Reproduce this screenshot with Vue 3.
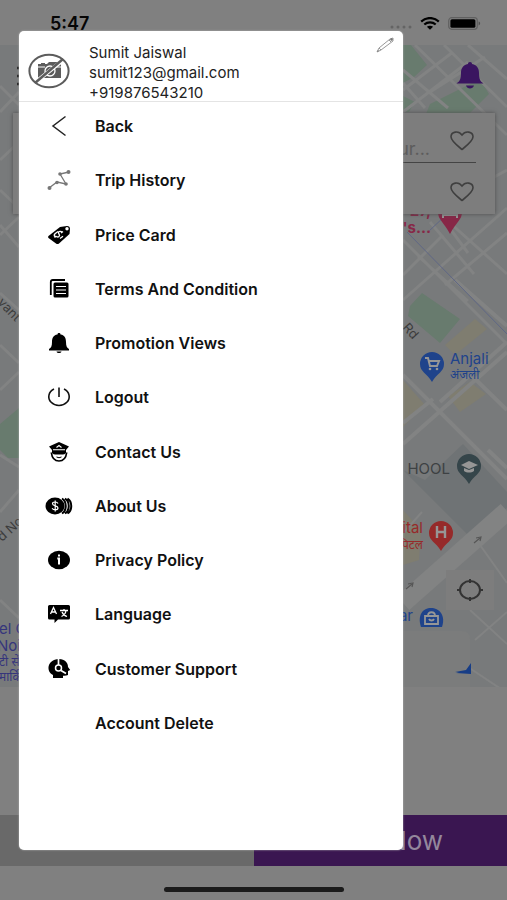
<script setup>
const items = [
  { label: 'Back', icon: 'back' },
  { label: 'Trip History', icon: 'trip' },
  { label: 'Price Card', icon: 'price' },
  { label: 'Terms And Condition', icon: 'terms' },
  { label: 'Promotion Views', icon: 'bell' },
  { label: 'Logout', icon: 'power' },
  { label: 'Contact Us', icon: 'officer' },
  { label: 'About Us', icon: 'coins' },
  { label: 'Privacy Policy', icon: 'info' },
  { label: 'Language', icon: 'language' },
  { label: 'Customer Support', icon: 'support' },
  { label: 'Account Delete', icon: '' }
]
</script>

<template>
  <div class="screen">
    <header class="status">
      <time class="clock">5:47</time>
      <div class="status-icons">
        <svg class="dots" viewBox="0 0 22 4" aria-hidden="true">
          <g fill="#646464"><circle cx="2" cy="2" r="1.5" /><circle cx="8" cy="2" r="1.5" /><circle cx="14" cy="2" r="1.5" /><circle cx="20" cy="2" r="1.5" /></g>
        </svg>
        <svg class="wifi" viewBox="0 0 20 13" aria-hidden="true">
          <path d="M1.2 4.6C6.2-.1 13.8-.1 18.8 4.6M4.3 7.5c3.3-2.9 8.1-2.9 11.4 0" fill="none" stroke="#000" stroke-width="2.3" />
          <path d="M6.9 9.7c1.8-1.4 4.4-1.4 6.2 0L10 12.8z" />
        </svg>
        <svg class="battery" viewBox="0 0 33 13" aria-hidden="true">
          <rect x=".7" y=".7" width="28.6" height="11.6" rx="3" fill="none" stroke="#606060" stroke-width="1.2" />
          <rect x="2.4" y="2.2" width="25" height="8.6" rx="1.6" />
          <path d="M30.6 4.6c2 .5 2 3.300 0 3.800z" fill="#505050" />
        </svg>
      </div>
    </header>

    <main class="map">
      <svg class="map-art" viewBox="0 45 507 642" preserveAspectRatio="xMaxYMin slice" aria-hidden="true">
        <rect y="45" width="507" height="642" fill="#787a7b" />
        <g fill="#687b6e">
          <path d="M403 45h8l16 20-13 12-11 6zM430 104l50-25 9 15-20 20h-43zM403 96l12 6-6 10h-6zM410 306l12-13 38 26-20 24-32-27z" />
          <path d="M0 424l19-16v50H8l-8-8z" />
        </g>
        <g fill="#7f7d70">
          <path d="M445 345l30-26 12 10-32 26zM448 396l22-14 16 12-26 18zM403 380l22 25-22 22zM403 510l18 20-2 30-16 5zM403 670l26 14h-26z" />
        </g>
        <path d="M425 480l38-36 44 48v16l-40 26-64-64z" fill="#6f7375" />
        <g fill="none" stroke="#828383" stroke-width="3">
          <path d="M415 45l92 90M444 45l63 62M403 90l50-38M403 112l65-50M425 108l-22-25M403 70l45 38M430 92l55-35M468 45l39 34M470 190l37-20M403 240l104 104M440 214l67 60M403 300l104-92M418 256l50 45M445 285l62-52M440 215l28 38M455 206l35-30M403 275l40-40M430 222l44 52" />
          <path d="M403 375l104 104M403 444l104-92M455 280l52 46M403 423l30-24M440 402l67-60M470 374l37 36M488 450l19 18" stroke-width="4" />
          <path d="M403 603l104-92" stroke-width="19" />
          <path d="M470 610l37 34M450 655l57 38M475 640l32-28M404 532l18-20M440 687l-30-18M480 545l27 38" stroke-width="2" />
          <path d="M0 86l19 19M0 112l19-20M0 160l19-18M0 190l19 18M0 225l19 22M0 235l19-18M0 293l19 17M0 345l19 18M0 390l19-18M0 512l19-22M0 455l19 12M0 600l19 18" />
        </g>
        <path d="M407 232l100 102M428 232l18-17" fill="none" stroke="#5f6785" stroke-width="1" />
        <g fill="none" stroke="#565656" stroke-width="1.2">
          <path d="M474 543l6-5m-4 0l5-1-1 4M406 589l6-5m-4 0l5-1-1 4" />
        </g>

        <g class="place rose">
          <text x="431" y="216" text-anchor="end" font-weight="700">27,</text>
          <text x="431" y="233" text-anchor="end" font-weight="700">C's...</text>
          <path d="M438 207a12 12 0 0 1 24 5c0 8-6 10-12 22-6-12-12-14-12-22z" fill="#872747" />
          <path d="M443 218v-7m0 4h14v3m-11-3v-3h11v3" fill="none" stroke="#969696" stroke-width="2" />
        </g>
        <text class="road" transform="translate(402 328) rotate(48)">Rd</text>
        <text class="road" transform="translate(-3 303) rotate(46)">vant</text>
        <text class="road" transform="translate(2 542) rotate(-42)">d No</text>

        <g class="place blue">
          <path d="M420 364a12 12 0 0 1 24 0c0 8-7 9-12 18-5-9-12-10-12-18z" />
          <path d="M425 358h3l2 8h7l2-5h-10" fill="none" stroke="#969696" stroke-width="2" />
          <circle cx="430" cy="369" r="1.3" fill="#969696" /><circle cx="437" cy="369" r="1.3" fill="#969696" />
          <text x="450" y="364">Anjali</text>
          <text class="hindi" x="450" y="379">अंजली</text>
        </g>
        <g class="place slate">
          <text x="450" y="474" text-anchor="end">HOOL</text>
          <path d="M457 466a12 12 0 0 1 24 0c0 8-7 9-12 18-5-9-12-10-12-18z" />
          <path d="M461 465l8-4 9 4-9 4zM464 468v3c3 2 7 2 10 0v-3l-5 2z" fill="#969696" />
        </g>
        <g class="place red">
          <text x="423" y="533" text-anchor="end">Hospital</text>
          <text class="hindi" x="423" y="549" text-anchor="end">हॉस्पिटल</text>
          <path d="M429 533a12 12 0 0 1 24 0c0 8-7 9-12 18-5-9-12-10-12-18z" />
          <path d="M437 526v12m8-12v12m-8-6h8" fill="none" stroke="#969696" stroke-width="2.4" />
        </g>
        <g class="place blue">
          <text x="413" y="621" text-anchor="end">Bazaar</text>
          <path d="M421 627c-4-12 2-19 10-19s15 7 11 19z" />
          <path d="M425 616h13v8h-13zm3 0c0-5 7-5 7 0m-6 3c1 2 4 2 5 0" fill="none" stroke="#969696" stroke-width="1.8" />
        </g>
        <g class="place indigo">
          <text x="-1" y="634">el Ci</text>
          <text x="-3" y="651">Noida</text>
          <text class="hindi" x="-1" y="666">टी सेंटर</text>
          <text class="hindi" x="-1" y="681">मार्किट</text>
        </g>
        <path d="M380 631h82q8 0 8 8v48h-90z" fill="#7b7c7c" />
        <path d="M456 673l11-2 4-8v11zM455 672l11-2 5-7v11z" fill="#173d86" />
      </svg>

      <div class="topbar">
        <button class="plain" type="button" aria-label="Menu">
          <svg class="menu-icon" viewBox="0 0 26 20"><path d="M0 2h26M0 10h26M0 18h26" stroke="#222" stroke-width="2.500" /></svg>
        </button>
        <button class="plain" type="button" aria-label="Notifications">
          <svg class="alert-icon" viewBox="0 0 28 28">
            <path d="M14 0c1.300 0 2 .8 2 2 5.500 1 7 5 7 9 0 6 1 8 4.500 10.500H.5C4 19 5 17 5 11c0-4 1.500-8 7-9 0-1.200.7-2 2-2zM10 23.500h8c-1 4-7 4-8 0z" fill="#3a1560" />
          </svg>
        </button>
      </div>

      <form class="search" @submit.prevent>
        <div class="search-row lined">
          <input class="search-input" type="text" aria-label="Pickup" placeholder="Your..." />
          <button class="plain" type="button" aria-label="Save pickup">
            <svg class="heart" viewBox="0 0 24 20"><path d="M12 18.500C7 14.500 1 10 1 5.800 1 .500 8.500-.8 12 4 15.500-.8 23 .500 23 5.800 23 10 17 14.500 12 18.500z" /></svg>
          </button>
        </div>
        <div class="search-row">
          <input class="search-input" type="text" aria-label="Destination" />
          <button class="plain" type="button" aria-label="Save destination">
            <svg class="heart" viewBox="0 0 24 20"><path d="M12 18.500C7 14.500 1 10 1 5.800 1 .500 8.500-.8 12 4 15.500-.8 23 .500 23 5.800 23 10 17 14.500 12 18.500z" /></svg>
          </button>
        </div>
      </form>

      <button class="locate" type="button" aria-label="My location">
        <svg viewBox="0 0 28 24"><ellipse cx="14" cy="12" rx="10" ry="9" /><path d="M14 1v4M14 19v4M1 12h4M23 12h4" /></svg>
      </button>
    </main>

    <div class="sheet"></div>
    <div class="actions">
      <button class="action later" type="button" aria-label="Later"></button>
      <button class="action now" type="button">Book Now</button>
    </div>
    <footer class="home"><span class="home-bar"></span></footer>

    <aside class="drawer">
      <div class="profile">
        <svg class="avatar" viewBox="0 0 42 36" aria-hidden="true">
          <path d="M10 11h3v-1h4v1h2l2-2h8l2 2h2v14H10z" fill="#5c5c5c" />
          <circle cx="22" cy="18" r="5" fill="none" stroke="#fff" stroke-width="1.300" />
          <path d="M10 14h7M27 14h6" stroke="#fff" stroke-width="1" />
          <path d="M9 28L34 8" stroke="#fff" stroke-width="4" />
          <path d="M7 30L35 6" stroke="#5c5c5c" stroke-width="2.500" />
          <ellipse cx="21" cy="18" rx="19.600" ry="16.200" fill="none" stroke="#5c5c5c" stroke-width="2" />
        </svg>
        <div class="details">
          <span>Sumit Jaiswal</span>
          <span>sumit123@gmail.com</span>
          <span>+919876543210</span>
        </div>
        <button class="plain edit" type="button" aria-label="Edit profile">
          <svg viewBox="0 0 18 16"><path d="M1 15l2-4L14 2l3-1v3L5 13zM3 11l2 2M13 3l2 2" fill="#fff" stroke="#999" stroke-width="1" /><path d="M14 2l2-1 1 2-2 1zM1 15l1-2 1 1z" fill="#777" /></svg>
        </button>
      </div>

      <nav class="menu">
        <a v-for="item in items" :key="item.label" class="item" href="#">
          <svg class="icon" viewBox="0 0 28 24" aria-hidden="true">
            <path v-if="item.icon === 'back'" d="M20.500 2.500L8 12l12.500 9.500" fill="none" stroke="#222" stroke-width="1.500" />
            <g v-else-if="item.icon === 'trip'" fill="#777">
              <path d="M4 20l8-6 9 2-6-10 9-2" fill="none" stroke="#777" stroke-width="1.300" />
              <circle cx="4.500" cy="20" r="2" /><circle cx="12" cy="14.500" r="1.800" /><circle cx="21" cy="16" r="1.800" /><circle cx="15" cy="6" r="1.800" /><circle cx="23.500" cy="4" r="2" />
            </g>
            <g v-else-if="item.icon === 'price'">
              <path d="M3.500 13L15 4l7-1q3 0 3 3l-.5 5L14 20.500q-1.500 1-3 0L3.500 15q-1-1 0-2z" />
              <circle cx="22" cy="5.800" r="1.700" fill="#fff" />
              <path d="M17.500 9.500c-2.500-2.500-5-.5-3.500 1.500s-.5 4.300-3.500 2M18 8.500l-2 1.500M9.500 14.500l1.500-1.300M13 8.500l-3 2.200q-1.500 1.500 0 3M15 15.500l3-2.200" fill="none" stroke="#fff" stroke-width="1.300" />
            </g>
            <g v-else-if="item.icon === 'terms'">
              <path d="M5.800 18V5q0-2 2-2H20" fill="none" stroke="#000" stroke-width="1.800" />
              <rect x="8.500" y="5.500" width="15" height="15" rx="1.500" />
              <path d="M11 9.500h10M11 13h10M11 16.500h10" stroke="#fff" stroke-width="1.200" />
            </g>
            <path v-else-if="item.icon === 'bell'" d="M14 2c1 0 1.500.5 1.500 1.500C20 4 21 7.500 21 11c0 4 1 6 3 7v1.500H4V18c2-1 3-3 3-7 0-3.500 1-7 5.500-7.500C12.500 2.500 13 2 14 2zM11.500 20.500h5c-.5 2-4.500 2-5 0z" />
            <path v-else-if="item.icon === 'power'" d="M9 4A10.200 8.800 0 1 0 19 4M14 2.500V12" fill="none" stroke="#111" stroke-width="1.600" />
            <g v-else-if="item.icon === 'officer'">
              <path d="M4 6.500Q10 3.500 14 2q4 1.500 10 4.500L21 10v2H7v-2z" />
              <path d="M11.500 7.500l2.500-2 2.500 2M8 9.800h12" fill="none" stroke="#fff" stroke-width="1.100" />
              <path d="M6.300 12.500C7 18 10 21 14 21s7-3 7.700-8.500" fill="none" stroke="#000" stroke-width="1.700" />
              <path d="M7 11.500h14v1.500q-2 2-4 1.500h-6q-2 .5-4-1.500z" />
              <path d="M11.500 17q2.500 1.500 5 0" fill="none" stroke="#000" stroke-width="1" />
            </g>
            <g v-else-if="item.icon === 'coins'">
              <ellipse cx="10" cy="12" rx="9.500" ry="8.500" />
              <path d="M17 4.500c5 3 5 12 0 15M20 4.500c5 3 5 12 0 15M22.500 4.500c5 3 5 12 0 15" fill="none" stroke="#000" stroke-width="2" />
              <path d="M13 9.500c-1-2-5.500-2-5.500.2 0 2.800 5.500 1.500 5.500 4.300 0 2.300-4.800 2.300-5.800.2M10.200 6.500v11" fill="none" stroke="#fff" stroke-width="1.200" />
            </g>
            <g v-else-if="item.icon === 'info'">
              <ellipse cx="14" cy="12" rx="11" ry="9.200" />
              <path d="M14 6.500v2M12.300 10.500h1.700v6" fill="none" stroke="#fff" stroke-width="2" />
            </g>
            <g v-else-if="item.icon === 'language'">
              <path d="M4.500 3h19Q25 3 25 4.500V16q0 1.500-1.500 1.500H13L9.500 21v-3.500h-5Q3 17.500 3 16V4.500Q3 3 4.500 3z" />
              <path d="M5.500 12l3-6.500 3 6.500M6.500 10h4M15 8.500h8M19 7v1.500M16.500 14.500q4-2 4.500-6M17 10q1.500 3.500 5 4.500" fill="none" stroke="#fff" stroke-width="1.300" />
            </g>
            <g v-else-if="item.icon === 'support'">
              <path d="M14 2c6 0 9 4 9 8l2.200 3-2.200 1v4q-2 1-5 .7V21H8v-3C1.500 15 1 3 14 2z" />
              <path d="M13.500 1.500V8M16 13.500l5 3" stroke="#fff" stroke-width="1.700" />
              <circle cx="13.500" cy="11" r="3" fill="none" stroke="#fff" stroke-width="1.500" />
            </g>
          </svg>
          <span>{{ item.label }}</span>
        </a>
      </nav>
    </aside>
  </div>
</template>

<style>
body {
  margin: 0;
  background: #808080;
}
</style>

<style scoped>
* {
  box-sizing: border-box;
}
.screen {
  position: relative;
  display: flex;
  flex-direction: column;
  min-height: 100vh;
  overflow: hidden;
  background: #808080;
  font-family: Inter, "Noto Sans", sans-serif;
}
.plain {
  display: flex;
  padding: 0;
  border: 0;
  background: none;
}
.status {
  display: flex;
  justify-content: space-between;
  height: 45px;
  padding: 13px 26px 0 50px;
}
.clock {
  font-size: 18px;
  line-height: 22px;
  font-weight: 600;
  color: #050505;
}
.status-icons {
  display: flex;
  align-items: center;
  gap: 8px;
  height: 20px;
}
.dots {
  width: 22px;
  height: 4px;
  align-self: flex-end;
  margin-bottom: 4px;
}
.wifi {
  width: 20px;
  height: 13px;
}
.battery {
  width: 33px;
  height: 13px;
}
.map {
  position: relative;
  flex: 1 0 auto;
  display: flex;
  flex-direction: column;
}
.map-art {
  position: absolute;
  inset: 0;
  width: 100%;
  height: 100%;
}
.place {
  font-size: 15px;
}
.hindi {
  font-size: 12px;
}
.rose { fill: #872747; }
.blue { fill: #1f438b; }
.slate { fill: #35454a; }
.red { fill: #962a2a; }
.indigo { fill: #35357c; }
.slate text { fill: #3d4143; }
.road {
  font-size: 13px;
  fill: #3c3c3c;
}
.topbar {
  position: relative;
  display: flex;
  align-items: center;
  justify-content: space-between;
  height: 68px;
  padding: 0 23px 6px 17px;
}
.menu-icon {
  width: 26px;
  height: 20px;
}
.alert-icon {
  width: 28px;
  height: 28px;
}
.search {
  position: relative;
  margin: 0 12px 0 13px;
  padding: 0 19px 0 20px;
  background: #7d7d7d;
  box-shadow: 0 0 4px #4c4c4c;
}
.search-row {
  display: flex;
  align-items: center;
  gap: 20px;
  height: 51px;
  padding: 6px 2px 0 0;
}
.lined {
  height: 50px;
  border-bottom: 1px solid #444;
}
.search-input {
  flex: 1;
  min-width: 0;
  height: 44px;
  padding: 16px 0 0;
  border: 0;
  background: none;
  text-align: right;
  font: 18px Inter, sans-serif;
}
.search-input::placeholder {
  color: #5c5c5c;
}
.heart {
  width: 24px;
  height: 20px;
  fill: none;
  stroke: #3f3f3f;
  stroke-width: 1.6;
}
.locate {
  position: relative;
  display: flex;
  align-items: center;
  justify-content: center;
  align-self: flex-end;
  width: 48px;
  height: 40px;
  margin: auto 13px 77px 0;
  padding: 0;
  border: 0;
  background: #7d7d7d;
}
.locate svg {
  width: 28px;
  height: 24px;
  fill: none;
  stroke: #333;
  stroke-width: 2;
}
.sheet {
  height: 128px;
}
.actions {
  display: grid;
  grid-template-columns: 1fr 1fr;
  height: 51px;
}
.action {
  border: 0;
  padding: 0;
  font: 26px Inter, sans-serif;
  color: #93879c;
}
.later {
  background: #696969;
}
.now {
  background: #3a1651;
}
.home {
  display: flex;
  justify-content: center;
  height: 34px;
  padding-top: 21px;
}
.home-bar {
  width: 180px;
  height: 5px;
  border-radius: 3px;
  background: #1b1b1b;
}
.drawer {
  position: absolute;
  inset: 31px 104px 50px 19px;
  display: flex;
  flex-direction: column;
  border-radius: 5px;
  background: #fff;
  box-shadow: 0 0 2px #bbb;
}
.profile {
  display: flex;
  align-items: flex-start;
  height: 71px;
  padding: 6px 9px 0 9px;
  border-bottom: 1px solid #e4e4e4;
}
.avatar {
  width: 42px;
  height: 36px;
  margin-top: 16px;
}
.details {
  display: flex;
  flex: 1;
  flex-direction: column;
  margin: 6px 0 0 19px;
  font-size: 15px;
  line-height: 20px;
  color: #222;
}
.edit svg {
  width: 18px;
  height: 16px;
}
.menu {
  display: flex;
  flex: 1;
  flex-direction: column;
  justify-content: space-between;
  padding: 7px 26px 110px;
}
.item {
  display: flex;
  align-items: center;
  gap: 22px;
  height: 34px;
  font-size: 16px;
  font-weight: 600;
  color: #111;
  text-decoration: none;
}
.icon {
  width: 28px;
  height: 24px;
}
</style>
